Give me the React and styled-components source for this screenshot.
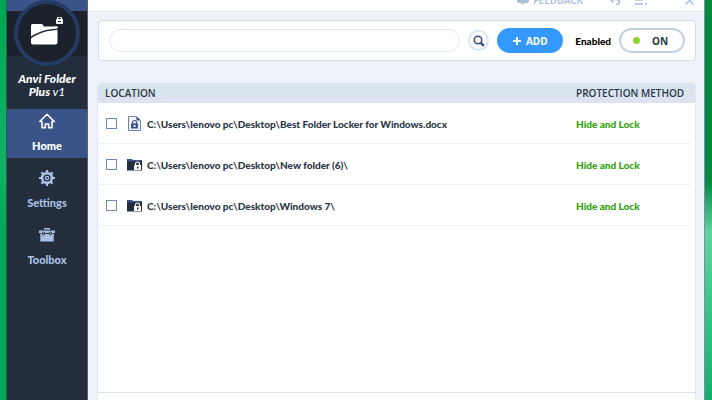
import React, { useState } from 'react'
import styled, { createGlobalStyle } from 'styled-components'

const files = [
  { path: 'C:\\Users\\lenovo pc\\Desktop\\Best Folder Locker for Windows.docx', type: 'file' },
  { path: 'C:\\Users\\lenovo pc\\Desktop\\New folder (6)\\', type: 'folder' },
  { path: 'C:\\Users\\lenovo pc\\Desktop\\Windows 7\\', type: 'folder' },
]

const LogoIcon = () => (
  <svg width="34" height="32" viewBox="0 0 34 32" aria-hidden="true">
    <path d="M1 8.500q0-1.500 1.500-1.500h9q1 0 1.500 1l.8 1.500h9.200q3-.5 4.500-.3v2.600C15 12.300 7 15.500 1 19.500z" fill="#fff" />
    <path d="M1 21.500C8 16 18 13.300 27.500 13v12.500q0 2-2 2H3q-2 0-2-2z" fill="#fff" />
    <rect x="26" y="2" width="7" height="5" rx="1" fill="#fff" />
    <path d="M27.500 2.500V1.500a2 1.500 0 0 1 4 0v1" fill="none" stroke="#fff" strokeWidth="1.200" />
    <rect x="28" y="4" width="3" height="1" fill="#1b222c" />
  </svg>
)

const HomeIcon = () => (
  <svg width="16" height="16" viewBox="0 0 16 16" fill="none" stroke="currentColor" strokeWidth="1.600" aria-hidden="true">
    <path d="M.8 8.500 8 1.300l7.200 7.200h-2.200v6.200H9.700v-3.700H6.300v3.700H3V8.500z" strokeLinejoin="round" />
  </svg>
)

const GearIcon = () => (
  <svg width="16" height="16" viewBox="0 0 16 16" fill="none" stroke="currentColor" aria-hidden="true">
    <circle cx="8" cy="8" r="4.900" strokeWidth="2.600" />
    <circle cx="8" cy="8" r="1.600" strokeWidth="1.300" />
    <path d="M8 0v3M8 13v3M0 8h3M13 8h3M2.400 2.400l2 2M11.600 11.600l2 2M2.400 13.600l2-2M11.600 4.400l2-2" strokeWidth="2.200" />
  </svg>
)

const ToolboxIcon = () => (
  <svg width="16" height="16" viewBox="0 0 16 16" aria-hidden="true">
    <path d="M5 1h6v1.500H5z" fill="currentColor" />
    <rect y="3.500" width="16" height="2.500" fill="currentColor" />
    <rect x="1.300" y="6.500" width="13.400" height="8" fill="currentColor" />
    <path d="M6 6.500h4" stroke="#242d3c" />
    <rect x="3.500" y="5" width="2" height="3" rx="1" fill="#a9c0e2" stroke="#242d3c" />
    <rect x="10.500" y="5" width="2" height="3" rx="1" fill="#a9c0e2" stroke="#242d3c" />
  </svg>
)

const SearchIcon = () => (
  <svg width="12" height="12" viewBox="0 0 12 12" fill="none" stroke="#34497c" aria-hidden="true">
    <circle cx="5" cy="5" r="3.700" strokeWidth="1.500" />
    <path d="m7.800 7.800 3 3" strokeWidth="2.400" />
  </svg>
)

const PlusIcon = () => (
  <svg width="8" height="8" viewBox="0 0 8 8" stroke="#fff" strokeWidth="2" aria-hidden="true">
    <path d="M4 0v8M0 4h8" />
  </svg>
)

const FileIcon = () => (
  <svg width="15" height="15" viewBox="0 0 15 15" aria-hidden="true">
    <path d="M1.500.5h8l4 4v10h-12z" fill="#f2f6fb" stroke="#6d82ab" />
    <path d="M9.500.5v4h4z" fill="#34497c" />
    <rect x="4" y="7.500" width="7" height="5" fill="#3a5488" />
    <path d="M5.500 8V6.500a2 2 0 0 1 4 0V8" fill="none" stroke="#3a5488" strokeWidth="1.200" />
    <rect x="6.500" y="9" width="2" height="2" fill="#dfe8f5" />
  </svg>
)

const FolderIcon = () => (
  <svg width="15" height="15" viewBox="0 0 15 15" aria-hidden="true">
    <path d="M0 2h5l1 1h9v3H0z" fill="#3a5488" />
    <path d="M0 4.500h15V13.500H0z" fill="#242d3c" />
    <rect x="7" y="8" width="7" height="5" fill="#fff" />
    <path d="M8.500 9V7a2 2 0 0 1 4 0v2" fill="none" stroke="#fff" strokeWidth="1.200" />
    <rect x="10" y="9.500" width="1.500" height="2" fill="#242d3c" />
  </svg>
)

const FeedbackIcon = () => (
  <svg width="12" height="10" viewBox="0 0 12 10" fill="currentColor" aria-hidden="true">
    <path d="M0 0h12v6q0 2-2 2H8l-3 2-.500-2H2Q0 8 0 6z" />
  </svg>
)

const UndoIcon = () => (
  <svg width="12" height="10" viewBox="0 0 12 10" fill="none" stroke="currentColor" strokeWidth="1.500" aria-hidden="true">
    <path d="M4.500 1.500 1.500 4.500l3 3M2 4.500h5q3.500 0 3.500 2.500T7 9.500" />
  </svg>
)

const MenuIcon = () => (
  <svg width="12" height="10" viewBox="0 0 12 10" stroke="currentColor" strokeWidth="1.500" aria-hidden="true">
    <path d="M0 1h12M0 5h8M0 9h8M10 9h2" />
  </svg>
)

const CloseIcon = () => (
  <svg width="9" height="9" viewBox="0 0 9 9" stroke="currentColor" strokeWidth="1.500" aria-hidden="true">
    <path d="m.5.5 8 8M8.500.5l-8 8" />
  </svg>
)

const App = () => {
  const [enabled, setEnabled] = useState(true)

  return (
    <Desktop>
      <GlobalStyle />
      <Window>
        <Sidebar>
          <Brand>
            <LogoCircle><LogoIcon /></LogoCircle>
            <BrandName>Anvi Folder<br />Plus <span>v1</span></BrandName>
          </Brand>
          <Nav>
            <NavLink href="#home" $active><HomeIcon />Home</NavLink>
            <NavLink href="#settings"><GearIcon />Settings</NavLink>
            <NavLink href="#toolbox"><ToolboxIcon />Toolbox</NavLink>
          </Nav>
        </Sidebar>
        <Main>
          <TitleBar>
            <TitleButton><FeedbackIcon />FEEDBACK</TitleButton>
            <TitleButton aria-label="Undo"><UndoIcon /></TitleButton>
            <TitleButton aria-label="Menu"><MenuIcon /></TitleButton>
            <CloseButton aria-label="Close"><CloseIcon /></CloseButton>
          </TitleBar>
          <Content>
            <Toolbar>
              <SearchInput type="text" aria-label="Search" />
              <SearchButton aria-label="Search"><SearchIcon /></SearchButton>
              <AddButton><PlusIcon />ADD</AddButton>
              <ToggleLabel htmlFor="protection">Enabled</ToggleLabel>
              <Toggle id="protection" aria-pressed={enabled} onClick={() => setEnabled(!enabled)}>
                <Dot $on={enabled} />{enabled ? 'ON' : 'OFF'}
              </Toggle>
            </Toolbar>
            <Panel>
              <Table>
                <thead>
                  <tr>
                    <HeadCell>LOCATION</HeadCell>
                    <HeadCell $method>PROTECTION METHOD</HeadCell>
                  </tr>
                </thead>
                <tbody>
                  {files.map((file) => (
                    <tr key={file.path}>
                      <Cell>
                        <FileLabel>
                          <Checkbox type="checkbox" />
                          {file.type === 'file' ? <FileIcon /> : <FolderIcon />}
                          {file.path}
                        </FileLabel>
                      </Cell>
                      <MethodCell>Hide and Lock</MethodCell>
                    </tr>
                  ))}
                </tbody>
              </Table>
              <PanelFooter />
            </Panel>
          </Content>
        </Main>
      </Window>
    </Desktop>
  )
}

export default App

const GlobalStyle = createGlobalStyle`
  * {
    box-sizing: border-box;
  }
  body {
    margin: 0;
    font-family: Lato, "Noto Sans", sans-serif;
    font-size: 10px;
    font-weight: 900;
    color: #2c3645;
  }
  button, input {
    font: inherit;
    color: inherit;
    margin: 0;
    padding: 0;
  }
  svg {
    flex-shrink: 0;
  }
`;

const Desktop = styled.div`
  display: flex;
  min-height: 100vh;
  padding: 0 7px 0 6px;
  background:
    linear-gradient(#008a3e 0%, #00893f 45%, #5fd49c 58%, #3cc78a 75%, #12b06a 100%) right / 8px 100% no-repeat,
    linear-gradient(#00a651, #14b069 40%, #00a651 60%);
`;

const Window = styled.div`
  display: flex;
  flex: 1;
  border-left: 1px solid #126b4c;
  border-right: 1px solid #8288b0;
  background: #eff3f9;
`;

const Sidebar = styled.aside`
  width: 81px;
  border-right: 1px solid #58606c;
  background: #242d3c;
`;

const Brand = styled.div`
  display: flex;
  flex-direction: column;
  align-items: center;
  height: 109px;
  background: linear-gradient(#3a5488 11px, #1b222c 11px, #1b222c 56px, #242d3c 56px);
`;

const LogoCircle = styled.div`
  display: flex;
  align-items: center;
  justify-content: center;
  width: 66px;
  height: 66px;
  border: 4px solid #253b66;
  border-radius: 50%;
  background: #1b222c;
`;

const BrandName = styled.div`
  margin-top: 6px;
  font-size: 12px;
  font-style: italic;
  line-height: 13px;
  text-align: center;
  color: #fff;

  span {
    font-weight: 400;
  }
`;

const Nav = styled.nav`
  display: flex;
  flex-direction: column;
  gap: 8px;
`;

const NavLink = styled.a`
  display: flex;
  flex-direction: column;
  align-items: center;
  gap: 9px;
  height: 49px;
  padding-top: 4px;
  font-size: 11px;
  line-height: 16px;
  text-decoration: none;
  color: ${({ $active }) => ($active ? '#fff' : '#a9c0e2')};
  background: ${({ $active }) => ($active ? '#3a5488' : 'transparent')};
`;

const Main = styled.main`
  display: flex;
  flex: 1;
  flex-direction: column;
  min-width: 0;
`;

const TitleBar = styled.header`
  display: flex;
  align-items: flex-end;
  justify-content: flex-end;
  gap: 14px;
  height: 12px;
  padding: 0 10px 6px 0;
  border-bottom: 1px solid #dfe8ef;
  background: #fff;
`;

const TitleButton = styled.button`
  display: flex;
  align-items: center;
  gap: 4px;
  border: none;
  background: none;
  font-family: "Open Sans", "Noto Sans", sans-serif;
  font-weight: 600;
  line-height: 10px;
  color: #a9bddd;

  &:first-child {
    margin-right: 12px;
  }
`;

const CloseButton = styled(TitleButton)`
  margin-left: 24px;
`;

const Content = styled.div`
  display: flex;
  flex: 1;
  flex-direction: column;
  gap: 22px;
  padding: 8px 8px 0 9px;
`;

const Toolbar = styled.div`
  display: flex;
  align-items: center;
  height: 41px;
  margin-left: 1px;
  padding: 0 10px;
  border: 1px solid #cfddeb;
  border-radius: 4px;
  background: #fff;
`;

const SearchInput = styled.input`
  flex: 1;
  min-width: 0;
  height: 23px;
  padding: 0 10px;
  border: 1px solid #dde7f1;
  border-radius: 12px;
  background: #fff;
`;

const SearchButton = styled.button`
  display: flex;
  align-items: center;
  justify-content: center;
  width: 21px;
  height: 21px;
  margin: 0 8px;
  border: 2px solid #dbe5f0;
  border-radius: 50%;
  background: #fff;
`;

const AddButton = styled.button`
  display: flex;
  align-items: center;
  justify-content: center;
  gap: 5px;
  width: 66px;
  height: 25px;
  border: none;
  border-radius: 13px;
  background: #3399ff;
  font-family: "Noto Sans", sans-serif;
  font-weight: 700;
  color: #fff;
`;

const ToggleLabel = styled.label`
  margin: 0 8px 0 12px;
  color: #000;
`;

const Toggle = styled.button`
  display: flex;
  align-items: center;
  gap: 12px;
  width: 66px;
  height: 25px;
  padding-left: 12px;
  border: 2px solid #c0d0df;
  border-radius: 13px;
  background: #fff;
  font-family: "Noto Sans", sans-serif;
  font-weight: 700;
`;

const Dot = styled.span`
  width: 7px;
  height: 7px;
  border-radius: 50%;
  background: ${({ $on }) => ($on ? '#8fd62f' : '#b8c2cc')};
`;

const Panel = styled.section`
  display: flex;
  flex: 1;
  flex-direction: column;
  border: solid #e1eaf3;
  border-width: 0 1px 0 1px;
  border-radius: 4px 4px 0 0;
  background: #fff;
  overflow: hidden;
`;

const Table = styled.table`
  width: 100%;
  border-collapse: collapse;
`;

const HeadCell = styled.th`
  width: ${({ $method }) => ($method ? '119px' : 'auto')};
  height: 20px;
  padding: 1px 0 0 ${({ $method }) => ($method ? '0' : '7px')};
  background: #d9e4ee;
  text-align: left;
  font-family: "Open Sans", "Noto Sans", sans-serif;
  font-weight: 600;
  line-height: 19px;
`;

const Cell = styled.td`
  height: 41px;
  padding: 0 0 0 8px;
  background: linear-gradient(#edf2f7, #edf2f7) left bottom / 100% 1px no-repeat;
`;

const MethodCell = styled(Cell)`
  padding-left: 0;
  background-size: calc(100% - 4px) 1px;
  color: #2ba30c;
`;

const FileLabel = styled.label`
  display: flex;
  align-items: center;
  white-space: nowrap;

  svg {
    margin: 0 5px 0 10px;
  }
`;

const Checkbox = styled.input`
  appearance: none;
  width: 11px;
  height: 11px;
  border: 1px solid #7487ad;
  background: #fff;

  &:checked {
    background: #3a5488;
  }
`;

const PanelFooter = styled.div`
  height: 8px;
  margin-top: auto;
  border-top: 1px solid #d9e6f1;
`;
